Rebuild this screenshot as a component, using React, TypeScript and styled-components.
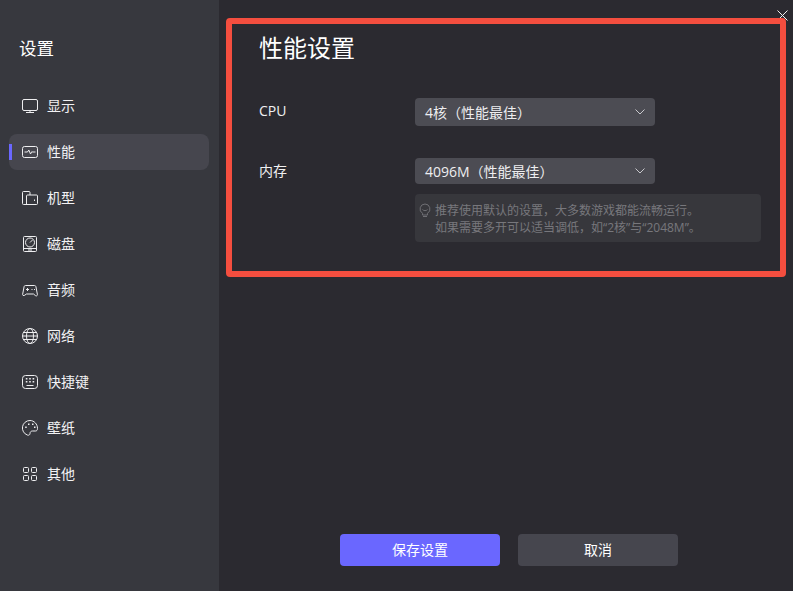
import React from 'react'
import styled, { createGlobalStyle } from 'styled-components'

const GlobalStyle = createGlobalStyle`
  html, body {
    margin: 0;
    padding: 0;
    background: #2b2a30;
  }
  * {
    box-sizing: border-box;
  }
`

const Window = styled.div`
  position: relative;
  display: flex;
  width: 793px;
  height: 591px;
  overflow: hidden;
  font-family: "Open Sans", "Noto Sans CJK SC", sans-serif;
  color: #fff;
  background: #2b2a30;
`

const Sidebar = styled.aside`
  flex: 0 0 219px;
  padding: 37px 10px 0 9px;
  background: #37383e;
`

const SidebarTitle = styled.div`
  height: 22px;
  padding-left: 10px;
  font-size: 17.5px;
  line-height: 22px;
`

const Menu = styled.nav`
  display: flex;
  flex-direction: column;
  gap: 10px;
  margin-top: 29px;
`

const MenuItem = styled.div<{ $active?: boolean }>`
  position: relative;
  display: flex;
  align-items: center;
  height: 36px;
  padding-left: 12px;
  gap: 8px;
  border-radius: 8px;
  font-size: 14px;
  line-height: 18px;
  color: #f2f2f4;
  background: ${(p) => (p.$active ? '#46464e' : 'transparent')};

  ${(p) =>
    p.$active &&
    `&::before {
      content: '';
      position: absolute;
      left: 0;
      top: 10px;
      width: 3px;
      height: 16px;
      background: #6a67ff;
    }`}
`

const Icon = styled.svg`
  flex: 0 0 18px;
  width: 18px;
  height: 18px;
  fill: none;
  stroke: #eeeef0;
  stroke-width: 1;
`

const Main = styled.main`
  flex: 1;
  display: flex;
  flex-direction: column;
  padding: 32px 0 25px 40px;
`

const Heading = styled.h1`
  margin: 0;
  height: 32px;
  font-size: 24px;
  font-weight: 400;
  line-height: 32px;
  color: #fff;
`

const Row = styled.div<{ $top: number }>`
  display: flex;
  align-items: flex-start;
  margin-top: ${(p) => p.$top}px;
`

const Label = styled.div`
  flex: 0 0 156px;
  font-size: 14px;
  line-height: 26px;
  color: #f0f0f2;
`

const Field = styled.div`
  display: flex;
  flex-direction: column;
`

const Select = styled.div<{ $h: number }>`
  display: flex;
  align-items: center;
  justify-content: space-between;
  width: 240px;
  height: ${(p) => p.$h}px;
  padding: 0 10px;
  border-radius: 4px;
  background: #4c4c53;
  font-size: 14px;
  line-height: 18px;
  color: #eeeef0;
`

const SelectValue = styled.span`
  margin-top: 2px;
`

const Chevron = styled.svg`
  width: 10px;
  height: 6px;
  fill: none;
  stroke: #c8c8cc;
  stroke-width: 1;
`

const Tip = styled.div`
  display: flex;
  gap: 4px;
  width: 346px;
  height: 48px;
  margin-top: 10px;
  padding: 8px 0 0 4px;
  border-radius: 4px;
  background: #37373c;
  font-size: 12px;
  line-height: 17px;
  color: #77777c;
`

const TipIcon = styled.svg`
  flex: 0 0 12px;
  width: 12px;
  height: 14px;
  margin-top: 1px;
  fill: none;
  stroke: #6f6f74;
  stroke-width: 1;
`

const Actions = styled.div`
  display: flex;
  gap: 18px;
  margin-top: auto;
  margin-left: 81px;
`

const ActionButton = styled.button<{ $primary?: boolean }>`
  width: 160px;
  height: 32px;
  padding: 0;
  border: 0;
  border-radius: 4px;
  font-family: inherit;
  font-size: 14px;
  line-height: 18px;
  color: #fff;
  background: ${(p) => (p.$primary ? '#6a67ff' : '#46464e')};
`

const CloseIcon = styled.svg`
  position: absolute;
  top: 10px;
  right: 5px;
  width: 11px;
  height: 11px;
  stroke: #f0f0f0;
  stroke-width: 1;
`

const Annotation = styled.div`
  position: absolute;
  left: 226px;
  top: 18px;
  width: 560px;
  height: 259px;
  border: 6px solid #f44e3f;
  border-radius: 4px;
  pointer-events: none;
`

const menu = [
  {
    label: '显示',
    icon: (
      <>
        <rect x="1.5" y="2.5" width="15" height="11" rx="1.5" />
        <path d="M9 13.5v2M5 15.500h8" />
      </>
    ),
  },
  {
    label: '性能',
    active: true,
    icon: (
      <>
        <rect x="1.5" y="3.5" width="15" height="11" rx="2" />
        <path d="M3.5 9h3l1.300-2 1.700 4 1.400-2.500.6.500h3" />
      </>
    ),
  },
  {
    label: '机型',
    icon: <path d="M2.500 2.500h5.500a1 1 0 0 1 1 1v2.500h6.500a1 1 0 0 1 1 1v7.500a1 1 0 0 1-1 1h-13a1 1 0 0 1-1-1v-11a1 1 0 0 1 1-1zM5.500 15.500V7a1 1 0 0 1 1-1H9M13.500 10.500v1.500" />,
  },
  {
    label: '磁盘',
    icon: (
      <>
        <rect x="2.500" y="1.500" width="13" height="15" rx="1" />
        <circle cx="9" cy="7.500" r="4.500" />
        <path d="M9 7.500 11.500 5M2.500 13.500h13M7 15h4" />
      </>
    ),
  },
  {
    label: '音频',
    icon: (
      <>
        <path d="M4.500 4.500h9a1.500 1.500 0 0 1 1.400 1.100l1.500 7.900a1.200 1.200 0 0 1-2.100 1L12.500 13h-7l-2.300 1.500a1.200 1.200 0 0 1-1.600-1l1.500-7.900a1.500 1.500 0 0 1 1.400-1.100z" />
        <path d="M5 8.500h3M6.500 7v3M10.500 8.500h1M13 8.500h1" />
      </>
    ),
  },
  {
    label: '网络',
    icon: (
      <>
        <circle cx="9" cy="9" r="7.500" />
        <ellipse cx="9" cy="9" rx="3.500" ry="7.500" />
        <path d="M1.500 9h15M2.500 5.500h13M2.500 12.500h13" />
      </>
    ),
  },
  {
    label: '快捷键',
    icon: (
      <>
        <rect x="1.500" y="2.500" width="15" height="13" rx="3" />
        <g strokeWidth="1.600">
          <path d="M4.800 5.800h1.600M8.200 5.800h1.600M11.600 5.800h1.600M4.800 8.800h1.600M8.200 8.800h1.600M11.600 8.800h1.600" />
        </g>
        <path d="M5.500 12.500h7" />
      </>
    ),
  },
  {
    label: '壁纸',
    icon: (
      <>
        <path d="M9 1.500a7.500 7.500 0 0 0-2.500 14.600c1.500.5 2.500-.5 2.500-1.600 0-1.500 1-2.500 2.500-2.500h3c1.300 0 2-1 2-2.500C16.500 5 13 1.500 9 1.500z" />
        <g strokeWidth="1.500">
          <path d="M4.200 8.300h1.500M7 5.200h1.500M11 5.200h1.500M13 8.300h1.500" />
        </g>
      </>
    ),
  },
  {
    label: '其他',
    icon: (
      <>
        <rect x="2.500" y="2.500" width="5" height="5" rx="1" />
        <rect x="10.500" y="2.500" width="5" height="5" rx="1" />
        <rect x="2.500" y="10.500" width="5" height="5" rx="1" />
        <rect x="10.500" y="10.500" width="5" height="5" rx="1" />
      </>
    ),
  },
]

function Arrow () {
  return (
    <Chevron viewBox="0 0 10 6">
      <path d="M.5.5 5 5 9.500.5" />
    </Chevron>
  )
}

export default function App () {
  return (
    <Window>
      <GlobalStyle />
      <Sidebar>
        <SidebarTitle>设置</SidebarTitle>
        <Menu>
          {menu.map((item) => (
            <MenuItem key={item.label} $active={item.active}>
              <Icon viewBox="0 0 18 18">{item.icon}</Icon>
              {item.label}
            </MenuItem>
          ))}
        </Menu>
      </Sidebar>
      <Main>
        <Heading>性能设置</Heading>
        <Row $top={34}>
          <Label>CPU</Label>
          <Field>
            <Select $h={28}>
              <SelectValue>4核（性能最佳）</SelectValue>
              <Arrow />
            </Select>
          </Field>
        </Row>
        <Row $top={32}>
          <Label>内存</Label>
          <Field>
            <Select $h={26}>
              <SelectValue>4096M（性能最佳）</SelectValue>
              <Arrow />
            </Select>
            <Tip>
              <TipIcon viewBox="0 0 12 14">
                <path d="M6 1a5 5 0 0 0-2.500 9.300V12h5v-1.700A5 5 0 0 0 6 1zM4 13.500h4M3.500 6.500c1 1.500 4 1.500 5 0" />
              </TipIcon>
              <div>
                推荐使用默认的设置，大多数游戏都能流畅运行。
                <br />
                如果需要多开可以适当调低，如“2核”与“2048M”。
              </div>
            </Tip>
          </Field>
        </Row>
        <Actions>
          <ActionButton $primary>保存设置</ActionButton>
          <ActionButton>取消</ActionButton>
        </Actions>
      </Main>
      <CloseIcon viewBox="0 0 11 11">
        <path d="M.5.5l10 10M10.500.5l-10 10" />
      </CloseIcon>
      <Annotation />
    </Window>
  )
}
